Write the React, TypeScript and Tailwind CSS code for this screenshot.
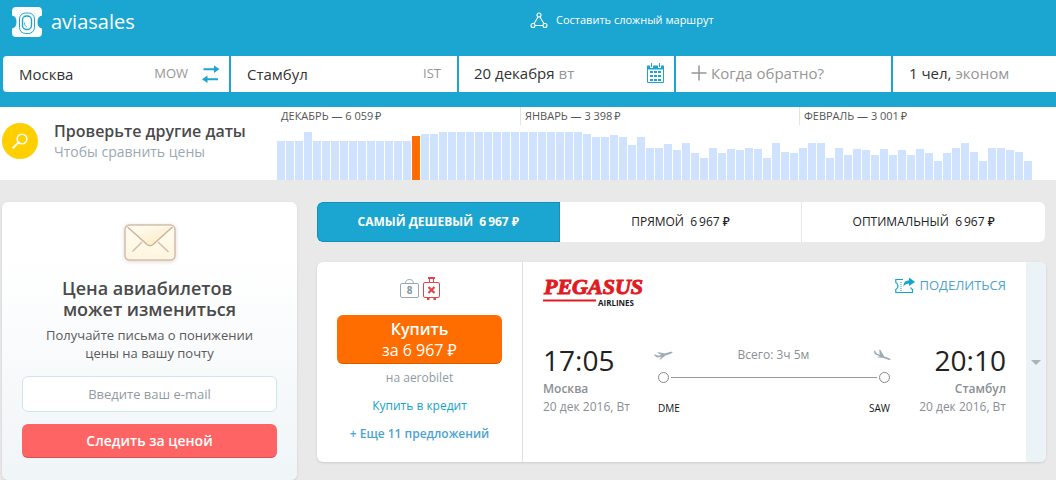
import {useState} from "react"
import type {FormEvent, ReactNode} from "react"
import clsx from "clsx"

interface Month {
  name: string
  price: string
  bars: number[]
}

interface Tab {
  id: string
  title: string
  price: string
}

const SELECTED_DAY = 15

const months: Month[] = [
  {
    name: "ДЕКАБРЬ",
    price: "6\u2005059",
    bars: [39, 39, 39, 48, 39, 39, 39, 39, 39, 39, 39, 39, 39, 39, 39, 44, 46, 46, 48, 48, 48, 48, 48, 48, 48, 48, 48],
  },
  {
    name: "ЯНВАРЬ",
    price: "3\u2005398",
    bars: [
      48, 48, 48, 48, 48, 48, 48, 46, 43, 43, 45, 43, 35, 43, 32, 32, 36, 30, 37, 27, 22, 32, 27, 31, 30, 32, 31, 22,
      37, 28, 27,
    ],
  },
  {
    name: "ФЕВРАЛЬ",
    price: "3\u2005001",
    bars: [32, 37, 37, 22, 32, 25, 31, 30, 25, 31, 25, 30, 25, 31, 27, 19, 27, 32, 37, 28, 19, 32, 32, 30, 28, 19],
  },
]

const tabs: Tab[] = [
  {id: "cheap", title: "САМЫЙ ДЕШЕВЫЙ", price: "6\u2009967"},
  {id: "direct", title: "ПРЯМОЙ", price: "6\u2009967"},
  {id: "optimal", title: "ОПТИМАЛЬНЫЙ", price: "6\u2009967"},
]

function LogoIcon() {
  return (
    <svg width="30" height="30" viewBox="0 0 30 30" fill="none">
      <path d="M4 0h22a4 4 0 0 1 4 4v4.500c-3 .5-4.500 2.500-4.500 6.500s1.500 6 4.500 6.500V26a4 4 0 0 1-4 4H4a4 4 0 0 1-4-4v-4.500c3-.5 4.500-2.500 4.500-6.500S3 9 0 8.500V4a4 4 0 0 1 4-4z" fill="#fff" />
      <rect x="7.500" y="6" width="15" height="20.500" rx="6" stroke="#1ba5d1" />
      <rect x="10.500" y="9" width="9" height="13.500" rx="4" stroke="#1ba5d1" strokeWidth="1.400" />
      <path d="M12.500 15.500c0 2.500.7 3.800 2.500 4.500" stroke="#1ba5d1" strokeWidth=".8" />
    </svg>
  )
}

function RouteIcon() {
  return (
    <svg width="18" height="17" viewBox="0 0 18 17" fill="none" stroke="#fff" strokeWidth="1.100">
      <circle cx="9" cy="3" r="2" />
      <circle cx="3" cy="13.500" r="2" />
      <circle cx="15" cy="13.500" r="2" />
      <path d="M8 5 4 11.700M10 5l4 6.700M5 13.500h8" />
    </svg>
  )
}

function SwapIcon() {
  return (
    <svg width="18" height="18" viewBox="0 0 18 18" fill="#1ba5d1">
      <path d="M1.500 3.200H12V.5L17.500 4 12 8V5.200H1.500zM16 13.200H5.500v-2.700L0 14.200l5.500 3.800v-2.800H16z" />
    </svg>
  )
}

function CalendarIcon() {
  return (
    <svg width="18" height="20" viewBox="0 0 18 20" fill="none">
      <path d="M.5 3.500h16v16H.5z" stroke="#1ba5d1" />
      <path d="M0 2.500h17v4H0z" fill="#1ba5d1" />
      <path d="M3 1h3v4H3zM11 1h3v4h-3z" fill="#fff" />
      <path d="M4.500 0v4M12.500 0v4" stroke="#1ba5d1" />
      <path d="M3 9h3M7 9h3M11 9h3M3 13h3M7 13h3M11 13h3M3 17h3M7 17h3M11 17h3" stroke="#1ba5d1" strokeWidth="2" />
    </svg>
  )
}

function PlusIcon() {
  return (
    <svg width="16" height="16" viewBox="0 0 16 16" stroke="#969696" strokeWidth="1.500">
      <path d="M8 .5v15M.5 8h15" />
    </svg>
  )
}

function SearchIcon() {
  return (
    <svg width="16" height="16" viewBox="0 0 16 16" fill="none" stroke="#fff" strokeLinecap="round">
      <circle cx="10" cy="6" r="4.800" strokeWidth="1.600" />
      <path d="M6.500 9.500 1.200 14.800" strokeWidth="2" />
    </svg>
  )
}

function EnvelopeIcon() {
  return (
    <svg width="52" height="38" viewBox="0 0 52 38" fill="none" className="drop-shadow-sm">
      <defs>
        <linearGradient id="paper" x1="0" y1="0" x2="0" y2="1">
          <stop offset="0" stopColor="#fffdf2" />
          <stop offset="1" stopColor="#fff5df" />
        </linearGradient>
        <linearGradient id="flap" x1="0" y1="0" x2="1" y2="1">
          <stop offset="0" stopColor="#fffdf6" />
          <stop offset="1" stopColor="#fbe9be" />
        </linearGradient>
      </defs>
      <rect x="1" y="1" width="50" height="35" rx="4.500" fill="url(#paper)" stroke="#d6bda7" strokeWidth="1.500" />
      <path d="m18 18-9.500 9.500M34 18l10.500 10" stroke="#d6bda7" strokeWidth="1.500" />
      <path d="M3.500 3 23 20.500c2 1.700 4 1.700 6 0L48.500 3" fill="url(#flap)" stroke="#cfb39b" strokeWidth="1.500" />
    </svg>
  )
}

function HandBagIcon() {
  return (
    <svg width="19" height="20" viewBox="0 0 19 20" fill="none" stroke="#99a7b2">
      <rect x=".5" y="5.500" width="18" height="14" rx="1.500" />
      <path d="M5.500 5.500C5.500 3 7 1.500 9.500 1.500s4 1.500 4 4" />
      <text x="9.500" y="16" textAnchor="middle" fontSize="10" fontWeight="700" fill="#8796a2" stroke="none">8</text>
    </svg>
  )
}

function SuitcaseIcon() {
  return (
    <svg width="17" height="23" viewBox="0 0 17 23" fill="none" stroke="#e04848">
      <rect x=".5" y="5.500" width="16" height="15" rx="1.500" />
      <path d="M6.500 5V1.500M10.500 5V1.500" />
      <path d="M5 1h7M4 22h2.500M10.500 22H13" strokeWidth="2" />
      <path d="m5.500 10 6 6M11.500 10l-6 6" strokeWidth="2.200" />
    </svg>
  )
}

function PegasusLogo() {
  return (
    <svg width="102" height="32" viewBox="0 0 102 32" role="img" aria-label="Pegasus Airlines" className="overflow-visible">
      <text x="1" y="18" fontFamily="Liberation Serif, serif" fontSize="22" fontWeight="700" fontStyle="italic" fill="#e01b22" stroke="#e01b22">
        PEGASUS
      </text>
      <path d="M0 24.500h53" stroke="#e01b22" strokeWidth="1.800" />
      <text x="55" y="30" fontSize="8" fontWeight="700" fill="#1d1d1f">AIRLINES</text>
    </svg>
  )
}

function ShareIcon() {
  return (
    <svg width="20" height="17" viewBox="0 0 20 17" fill="none" stroke="#12a5cb">
      <path d="M8 2.500H.8V5.500C2.200 6.200 3 7.500 3 9s-.8 2.800-2.200 3.500v3h16.700V12.500c-1-.5-1.500-1-1.800-2" strokeWidth="1.200" />
      <path d="M6 5v9" strokeDasharray="1 1" />
      <path d="M8.500 9.500C8.500 5.500 10.500 3.500 14 3.500V.5l6 4.500-6 4V6.500c-2.500 0-4 .8-5.500 3z" fill="#12a5cb" stroke="none" />
    </svg>
  )
}

function DepartureIcon() {
  return (
    <svg width="19" height="9" viewBox="0 0 19 9" fill="#9eacb5">
      <path d="M0 3.800 1.300 3.500l3 1.300 2.900-1L3.200 1.700 4.800 1.200l6 1.400L15.800.9c1.400-.4 2.500-.3 2.700.2.100.6-.6 1.200-1.800 1.600l-5.200 1.800-4.700 3.700-1.600.5L7.500 5.600 4.200 6.600C2.500 6.700 1 5.300 0 3.800z" />
    </svg>
  )
}

function ArrivalIcon() {
  return (
    <svg width="17" height="12" viewBox="0 0 17 12" fill="#9eacb5">
      <path d="m0 1.500 1.200.4 1.600 2.600 2.900 1.200L5.200.5l1.300.5 3.600 6.200 5 2c1 .4 1.600 1 1.400 1.500-.2.500-1.100.5-2.200.1L9.500 8.900 4.300 8.600 2.900 8l3.200-.5L2 5.800C.5 5-.1 3.200 0 1.500z" />
    </svg>
  )
}

function Rub({children}: {children: ReactNode}) {
  return <span className="whitespace-nowrap">{children}&nbsp;₽</span>
}

function Header() {
  return (
    <header className="bg-[#1ba5d1] pb-[15px]">
      <div className="grid h-14 grid-cols-2 items-start">
        <a href="#" className="flex items-center gap-[9px] pt-[7px] pl-3 text-xl leading-7 text-white">
          <LogoIcon />
          aviasales
        </a>
        <a href="#" className="flex items-center gap-2 pt-3 pl-0.5 text-[11px] font-medium text-white">
          <RouteIcon />
          Составить сложный маршрут
        </a>
      </div>
      <form className="grid grid-cols-[226fr_226fr_215fr_215fr_163fr] gap-0.5 pl-[3px]" onSubmit={e => e.preventDefault()}>
        <div className="flex h-9 items-center rounded-l-sm bg-white pr-[9px] pl-4">
          <input aria-label="Откуда" defaultValue="Москва" className="w-full min-w-0 flex-1 text-[15px] text-[#333] outline-none" />
          <span className="mr-3.5 text-[13px] text-[#969696]">MOW</span>
          <button type="button" aria-label="Поменять местами">
            <SwapIcon />
          </button>
        </div>
        <div className="flex h-9 items-center bg-white px-4">
          <input aria-label="Куда" defaultValue="Стамбул" className="w-full min-w-0 flex-1 text-[15px] text-[#333] outline-none" />
          <span className="text-[13px] text-[#969696]">IST</span>
        </div>
        <button type="button" className="flex h-9 items-center gap-1 bg-white pr-[9px] pb-0.5 pl-[15px] text-[15px] text-[#333]">
          20 декабря <span className="flex-1 text-left text-[#969696]">вт</span>
          <CalendarIcon />
        </button>
        <button type="button" className="flex h-9 items-center gap-1 bg-white pb-0.5 pl-[15px] text-[15px] text-[#969696]">
          <PlusIcon />
          Когда обратно?
        </button>
        <button type="button" className="flex h-9 items-center gap-1 bg-white pb-0.5 pl-4 text-[15px] text-[#333]">
          1 чел, <span className="text-[#969696]">эконом</span>
        </button>
      </form>
    </header>
  )
}

function PriceCalendar() {
  return (
    <section className="flex h-[73px] bg-white">
      <div className="flex w-[277px] shrink-0 items-center gap-4 pb-[5px] pl-0.5">
        <button type="button" aria-label="Найти" className="flex size-9 items-center justify-center rounded-full bg-[#ffcf00]">
          <SearchIcon />
        </button>
        <div>
          <h2 className="text-base leading-[21px] font-semibold text-[#4a4a4a]">Проверьте другие даты</h2>
          <p className="text-sm leading-5 text-[#9ba8b3]">Чтобы сравнить цены</p>
        </div>
      </div>
      <div className="mr-[23px] flex flex-1">
        {months.map((month, index) => (
          <div key={month.name} className="flex flex-col justify-between" style={{flex: `${month.bars.length} 1 0`}}>
            <div className={clsx("h-[18px] pl-1 text-[11px] leading-[18px] text-[#555]", index > 0 && "border-l border-[#e2e2e2]")}>
              {month.name} — {month.price}{"\u2009"}₽
            </div>
            <div className="flex items-end">
              {month.bars.map((height, day) => (
                <div key={day} className="flex-1 pr-px">
                  <div
                    className={index === 0 && day === SELECTED_DAY ? "bg-[#ff6d00]" : "bg-[#cfe2ff]"}
                    style={{height}}
                  />
                </div>
              ))}
            </div>
          </div>
        ))}
      </div>
    </section>
  )
}

function Subscribe() {
  const [email, setEmail] = useState("")

  const onSubmit = (e: FormEvent) => {
    e.preventDefault()
    setEmail("")
  }

  return (
    <aside className="w-[295px] shrink-0 rounded-md bg-linear-to-b from-white from-20% to-[#f0f5f7] px-5 pt-[22px] pb-[22px] text-center shadow-sm">
      <div className="flex justify-center">
        <EnvelopeIcon />
      </div>
      <h2 className="mt-4 text-lg leading-[21px] font-semibold text-[#4a4a4a]">
        Цена авиабилетов&nbsp;
        <br />
        может измениться
      </h2>
      <p className="mt-1.5 text-[13px] leading-[18px] text-[#5a5a5a]">
        Получайте письма о понижении
        <br />
        цены на вашу почту
      </p>
      <form className="mt-3.5 flex flex-col gap-3" onSubmit={onSubmit}>
        <input
          type="email"
          aria-label="E-mail"
          value={email}
          onChange={e => setEmail(e.target.value)}
          placeholder="Введите ваш e-mail"
          className="h-9 rounded-md border border-[#cde6ec] bg-white text-center text-[13px] placeholder:text-[#919ba3]"
        />
        <button type="submit" className="h-[34px] rounded-md border-b border-[#d94f55] bg-[#ff6464] text-sm font-semibold text-white">
          Следить за ценой
        </button>
      </form>
    </aside>
  )
}

function SortTabs() {
  const [active, setActive] = useState("cheap")

  return (
    <div className="mr-px grid grid-cols-3 overflow-hidden rounded-md bg-white">
      {tabs.map(tab => (
        <button
          key={tab.id}
          type="button"
          onClick={() => setActive(tab.id)}
          className={clsx(
            "h-10 text-xs first:rounded-l-md last:rounded-r-md",
            active === tab.id
              ? "bg-[#1ba5d1] font-bold text-white inset-ring inset-ring-[#1190bb]"
              : "border-r border-[#e6e6e6] font-medium text-[#222] last:border-r-0",
          )}
        >
          {tab.title}&nbsp; <Rub>{tab.price}</Rub>
        </button>
      ))}
    </div>
  )
}

function Offer() {
  return (
    <div className="flex w-[206px] shrink-0 flex-col items-center border-r border-[#e0e0e0] px-5 pt-[15px] text-xs">
      <div className="flex items-end gap-1">
        <div className="pb-0.5">
          <HandBagIcon />
        </div>
        <SuitcaseIcon />
      </div>
      <button type="button" className="mt-[15px] w-full rounded-md border-b border-[#d95c00] bg-[#ff6d00] pt-1 pb-0.5 text-base leading-[21px] text-white">
        <span className="block font-semibold">Купить</span>
        за <Rub>{"6\u2005967"}</Rub>
      </button>
      <p className="mt-1.5 leading-4 text-[#8f9ba4]">на aerobilet</p>
      <a href="#" className="mt-3 leading-4 text-[#12a5cb]">Купить в кредит</a>
      <a href="#" className="mt-3 leading-4 font-semibold text-[#4ba3d3]">+ Еще 11 предложений</a>
    </div>
  )
}

function Endpoint({time, city, date}: {time: string; city: string; date: string}) {
  return (
    <div className="w-[87px] shrink-0 whitespace-nowrap text-xs leading-[18px] text-[#8a8f93]">
      <div className="text-[28px] leading-9 text-[#222]">{time}</div>
      <div className="mt-0.5 font-semibold">{city}</div>
      <div>{date}</div>
    </div>
  )
}

function Flight() {
  return (
    <div className="min-w-0 flex-1 px-5 pt-3.5">
      <div className="flex items-start justify-between">
        <PegasusLogo />
        <a href="#" className="flex items-center gap-1 text-[13px] leading-[18px] font-medium text-[#4ba3d3]">
          <ShareIcon />
          ПОДЕЛИТЬСЯ
        </a>
      </div>
      <div className="mt-[34px] flex">
        <Endpoint time="17:05" city="Москва" date="20 дек 2016, Вт" />
        <div className="mr-7 ml-6 min-w-0 flex-1 pt-1">
          <div className="flex items-center justify-between text-xs leading-[18px] text-[#8a8f93]">
            <DepartureIcon />
            Всего: 3ч 5м
            <ArrivalIcon />
          </div>
          <div className="mt-2 flex items-center gap-0.5 pr-px pl-1">
            <span className="size-[11px] rounded-full border border-[#888]" />
            <span className="h-px flex-1 bg-[#999]" />
            <span className="size-[11px] rounded-full border border-[#888]" />
          </div>
          <div className="mt-4 flex justify-between pr-px pl-1 text-[10px] leading-[18px] font-medium text-[#111]">
            <span>DME</span>
            <span>SAW</span>
          </div>
        </div>
        <div className="text-right">
          <Endpoint time="20:10" city="Стамбул" date="20 дек 2016, Вт" />
        </div>
      </div>
    </div>
  )
}

function App() {
  return (
    <div className="min-h-screen bg-[#e9e9e9] font-['Open_Sans','Noto_Sans',sans-serif]">
      <Header />
      <PriceCalendar />
      <main className="flex items-start gap-5 pt-[22px] pr-2.5 pl-0.5">
        <Subscribe />
        <div className="min-w-0 flex-1">
          <SortTabs />
          <article className="mt-5 flex min-h-[200px] overflow-hidden rounded-md bg-white shadow-sm">
            <Offer />
            <Flight />
            <button type="button" aria-label="Подробнее" className="flex w-5 shrink-0 items-center justify-center bg-[#ebf3f6]">
              <svg width="10" height="5" viewBox="0 0 10 5" fill="#a5b3bb">
                <path d="M0 0h10L5 5z" />
              </svg>
            </button>
          </article>
        </div>
      </main>
    </div>
  )
}

export default App
